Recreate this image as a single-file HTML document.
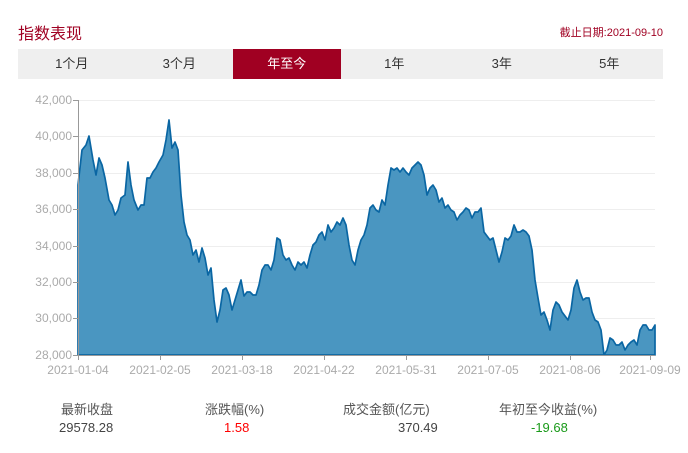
<!DOCTYPE html>
<html><head><meta charset="utf-8"><style>
body{margin:0;width:688px;height:453px;background:#fff;font-family:"Liberation Sans","Noto Sans CJK SC",sans-serif;position:relative;overflow:hidden}
.a{position:absolute;white-space:nowrap}
.tabs{position:absolute;left:18px;top:49px;width:645px;height:30px;background:#efefef;display:flex}
.tabs div{flex:1;text-align:center;line-height:30px;font-size:13px;color:#333}
.tabs .on{background:#a00022;color:#fff}
.yl{position:absolute;right:616px;font-size:12px;color:#aaa;line-height:12px;white-space:nowrap}
.xl{position:absolute;top:363px;font-size:12px;color:#aaa;transform:translateX(-50%);white-space:nowrap}
.lb{font-size:13px;color:#555;top:399px}
.v{font-size:13px;top:420px}
</style></head><body>
<div class="a" style="left:18px;top:20px;font-size:16px;color:#a00022">指数表现</div>
<div class="a" style="right:25px;top:24px;font-size:11px;color:#a00022">截止日期:2021-09-10</div>
<div class="tabs"><div>1个月</div><div>3个月</div><div class="on">年至今</div><div>1年</div><div>3年</div><div>5年</div></div>
<svg class="a" style="left:0;top:0" width="688" height="453">
<g stroke="#eee" stroke-width="1">
<line x1="78" x2="655" y1="100.5" y2="100.5"/><line x1="78" x2="655" y1="136.5" y2="136.5"/><line x1="78" x2="655" y1="173.5" y2="173.5"/><line x1="78" x2="655" y1="209.5" y2="209.5"/><line x1="78" x2="655" y1="246.5" y2="246.5"/><line x1="78" x2="655" y1="282.5" y2="282.5"/><line x1="78" x2="655" y1="318.5" y2="318.5"/>
</g>
<path fill="#4a96c1" stroke="#0a66a3" stroke-width="1.7" stroke-linejoin="round" d="M78,185 L82,150 86,145 89,136 93,160 96,175 99,158 102,165 105,178 109,200 112,205 115,215 118,210 121,198 125,195 128,162 131,185 134,200 138,210 141,205 144,205 147,178 150,178 153,172 156,168 159,162 163,155 166,140 169,120 172,148 175,142 178,150 181,195 184,222 187,235 190,240 193,255 196,250 199,262 202,248 205,258 208,275 211,268 214,300 217,322 220,310 223,290 226,288 229,295 232,310 235,300 238,290 241,280 244,296 247,292 250,292 253,295 256,295 259,285 262,270 265,265 268,265 271,270 274,260 277,238 280,240 283,255 286,260 289,258 292,265 295,270 298,262 301,265 304,262 307,268 310,255 313,245 316,242 319,235 322,232 325,240 328,225 331,232 334,228 337,222 340,225 343,218 346,225 349,245 352,260 355,265 358,250 361,240 364,235 367,225 370,208 373,205 376,210 379,212 382,200 385,205 388,185 391,168 394,170 397,168 400,172 403,168 406,172 409,175 412,168 415,165 418,162 421,165 424,175 427,195 430,188 433,185 436,190 439,202 442,198 445,208 448,205 451,210 454,212 457,220 460,215 463,212 466,208 469,210 472,218 475,212 478,212 481,208 484,232 487,236 490,240 493,238 496,250 499,262 502,252 505,238 508,240 511,236 514,225 517,232 520,232 523,230 526,232 529,236 532,250 535,280 538,298 541,315 544,312 547,320 550,330 553,310 556,302 559,305 562,312 565,316 568,320 571,310 574,288 577,280 580,292 583,300 586,298 589,298 592,312 595,320 598,322 601,330 604,355 607,350 610,338 613,340 616,345 619,345 622,342 625,350 628,345 631,342 634,340 637,345 640,330 643,325 646,325 649,330 652,330 655,325 L655,355 L78,355 Z"/>
<g stroke="#999" stroke-width="1">
<line x1="78.5" x2="78.5" y1="100" y2="355"/><line x1="78" x2="655" y1="355.5" y2="355.5"/>
<line x1="73" x2="78" y1="100.5" y2="100.5"/><line x1="73" x2="78" y1="136.5" y2="136.5"/><line x1="73" x2="78" y1="173.5" y2="173.5"/><line x1="73" x2="78" y1="209.5" y2="209.5"/><line x1="73" x2="78" y1="246.5" y2="246.5"/><line x1="73" x2="78" y1="282.5" y2="282.5"/><line x1="73" x2="78" y1="318.5" y2="318.5"/><line x1="73" x2="78" y1="355.5" y2="355.5"/>
<line x1="78.5" x2="78.5" y1="355" y2="360"/><line x1="160.5" x2="160.5" y1="355" y2="360"/><line x1="242.5" x2="242.5" y1="355" y2="360"/><line x1="324.5" x2="324.5" y1="355" y2="360"/><line x1="406.5" x2="406.5" y1="355" y2="360"/><line x1="488.5" x2="488.5" y1="355" y2="360"/><line x1="570.5" x2="570.5" y1="355" y2="360"/><line x1="650.5" x2="650.5" y1="355" y2="360"/>
</g></svg>
<div class="yl" style="top:94px">42,000</div><div class="yl" style="top:130px">40,000</div><div class="yl" style="top:167px">38,000</div><div class="yl" style="top:203px">36,000</div><div class="yl" style="top:240px">34,000</div><div class="yl" style="top:276px">32,000</div><div class="yl" style="top:312px">30,000</div><div class="yl" style="top:349px">28,000</div>
<div class="xl" style="left:78px">2021-01-04</div><div class="xl" style="left:160px">2021-02-05</div><div class="xl" style="left:242px">2021-03-18</div><div class="xl" style="left:324px">2021-04-22</div><div class="xl" style="left:406px">2021-05-31</div><div class="xl" style="left:488px">2021-07-05</div><div class="xl" style="left:570px">2021-08-06</div><div class="xl" style="left:650px">2021-09-09</div>
<div class="a lb" style="left:61px">最新收盘</div>
<div class="a lb" style="left:205px">涨跌幅(%)</div>
<div class="a lb" style="left:343px">成交金额(亿元)</div>
<div class="a lb" style="left:499px">年初至今收益(%)</div>
<div class="a v" style="left:59px;color:#444">29578.28</div>
<div class="a v" style="left:224px;color:#f00">1.58</div>
<div class="a v" style="left:398px;color:#444">370.49</div>
<div class="a v" style="left:531px;color:#1a9a1a">-19.68</div>
</body></html>
